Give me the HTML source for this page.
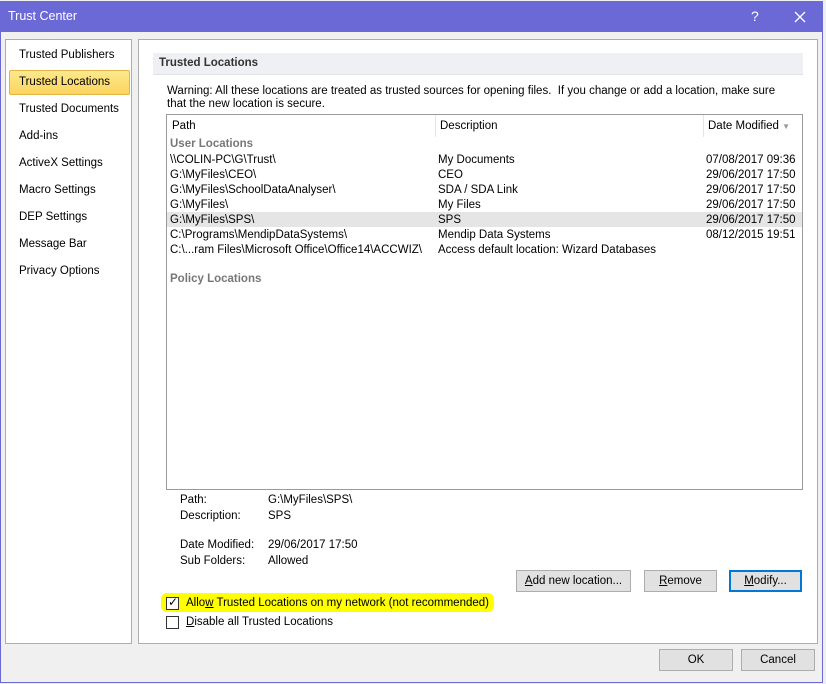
<!DOCTYPE html>
<html><head><style>
*{margin:0;padding:0;box-sizing:border-box}
body{width:826px;height:684px;background:#f0f0f0;font-family:"Liberation Sans",sans-serif;font-size:11.5px;color:#000;position:relative;overflow:hidden}
.abs{position:absolute;white-space:nowrap}
#win{position:absolute;left:0;top:1px;width:823px;height:682px;border:1px solid #6b69d6;background:#f0f0f0}
#title{position:absolute;left:0;top:1px;width:823px;height:31px;background:#6b69d6;color:#fff;font-size:12.5px}
#left{position:absolute;left:5px;top:39px;width:127px;height:605px;background:#fff;border:1px solid #adadad}
#right{position:absolute;left:138px;top:39px;width:680px;height:605px;background:#fff;border:1px solid #adadad}
.nav{position:absolute;left:13px}
.sel{position:absolute;left:3px;top:30px;width:121px;height:25px;background:linear-gradient(#fde88e,#fbd55e);border:1px solid #e3b548;border-radius:2px}
.btn{position:absolute;height:22px;background:#e1e1e1;border:1px solid #adadad;text-align:center;line-height:20px}
.cb{position:absolute;width:13px;height:13px;border:1px solid #333;background:#fff}
u{text-decoration:underline}
</style></head><body>
<div id="win"></div>
<div id="title"><span class="abs" style="left:8px;top:8px">Trust Center</span><span class="abs" style="left:751px;top:7px;font-size:14px">?</span>
<svg class="abs" style="left:794px;top:10px" width="12" height="12"><path d="M1 1L11 11M11 1L1 11" stroke="#fff" stroke-width="1.3"/></svg></div>
<div id="left">
<div class="sel"></div>
<span class="abs nav" style="top:9px">Trusted Publishers</span>
<span class="abs nav" style="top:36px">Trusted Locations</span>
<span class="abs nav" style="top:63px">Trusted Documents</span>
<span class="abs nav" style="top:90px">Add-ins</span>
<span class="abs nav" style="top:117px">ActiveX Settings</span>
<span class="abs nav" style="top:144px">Macro Settings</span>
<span class="abs nav" style="top:171px">DEP Settings</span>
<span class="abs nav" style="top:198px">Message Bar</span>
<span class="abs nav" style="top:225px">Privacy Options</span>
</div>
<div id="right">
<div class="abs" style="left:14px;top:13px;width:650px;height:22px;background:#eef0f4;border-bottom:1px solid #e0e2e6"></div>
<span class="abs" style="left:20px;top:17px;font-weight:bold;color:#333">Trusted Locations</span>
<span class="abs" style="left:28px;top:45px">Warning: All these locations are treated as trusted sources for opening files.&nbsp; If you change or add a location, make sure</span>
<span class="abs" style="left:28px;top:58px">that the new location is secure.</span>
<div class="abs" style="left:27px;top:74px;width:637px;height:376px;border:1px solid #9a9a9a;background:#fff">
 <div class="abs" style="left:268px;top:0;width:1px;height:22px;background:#e5e5e5"></div>
 <div class="abs" style="left:536px;top:0;width:1px;height:22px;background:#e5e5e5"></div>
 <span class="abs" style="left:5px;top:5px">Path</span>
 <span class="abs" style="left:273px;top:5px">Description</span>
 <span class="abs" style="left:541px;top:5px">Date Modified <span style="color:#999;font-size:8px">▼</span></span>
 <span class="abs" style="left:3px;top:23px;font-weight:bold;color:#777">User Locations</span>
 <div class="abs" style="left:0;top:97px;width:635px;height:15px;background:#e5e5e5"></div>
 <div style="position:absolute;left:3px;top:38px;line-height:15px">\\COLIN-PC\G\Trust\<br>G:\MyFiles\CEO\<br>G:\MyFiles\SchoolDataAnalyser\<br>G:\MyFiles\<br>G:\MyFiles\SPS\<br>C:\Programs\MendipDataSystems\<br>C:\...ram Files\Microsoft Office\Office14\ACCWIZ\</div>
 <div style="position:absolute;left:271px;top:38px;line-height:15px;white-space:nowrap">My Documents<br>CEO<br>SDA / SDA Link<br>My Files<br>SPS<br>Mendip Data Systems<br>Access default location: Wizard Databases</div>
 <div style="position:absolute;left:539px;top:38px;line-height:15px">07/08/2017 09:36<br>29/06/2017 17:50<br>29/06/2017 17:50<br>29/06/2017 17:50<br>29/06/2017 17:50<br>08/12/2015 19:51</div>
 <span class="abs" style="left:3px;top:158px;font-weight:bold;color:#777">Policy Locations</span>
</div>
<span class="abs" style="left:41px;top:454px">Path:</span><span class="abs" style="left:129px;top:454px">G:\MyFiles\SPS\</span>
<span class="abs" style="left:41px;top:470px">Description:</span><span class="abs" style="left:129px;top:470px">SPS</span>
<span class="abs" style="left:41px;top:499px">Date Modified:</span><span class="abs" style="left:129px;top:499px">29/06/2017 17:50</span>
<span class="abs" style="left:41px;top:515px">Sub Folders:</span><span class="abs" style="left:129px;top:515px">Allowed</span>
<div class="btn" style="left:377px;top:530px;width:115px"><u>A</u>dd new location...</div>
<div class="btn" style="left:505px;top:530px;width:73px"><u>R</u>emove</div>
<div class="btn" style="left:590px;top:530px;width:73px;border:2px solid #0078d7;line-height:18px"><u>M</u>odify...</div>
<div class="abs" style="left:22px;top:553px;width:333px;height:19px;background:#ffff00;border-radius:6px"></div>
<div class="cb" style="left:27px;top:557px"><span class="abs" style="left:1px;top:-3px;font-size:12px">✓</span></div>
<span class="abs" style="left:47px;top:557px">Allo<u>w</u> Trusted Locations on my network (not recommended)</span>
<div class="cb" style="left:27px;top:576px"></div>
<span class="abs" style="left:47px;top:576px"><u>D</u>isable all Trusted Locations</span>
</div>
<div class="btn" style="left:659px;top:649px;width:74px">OK</div>
<div class="btn" style="left:741px;top:649px;width:74px">Cancel</div>
</body></html>
